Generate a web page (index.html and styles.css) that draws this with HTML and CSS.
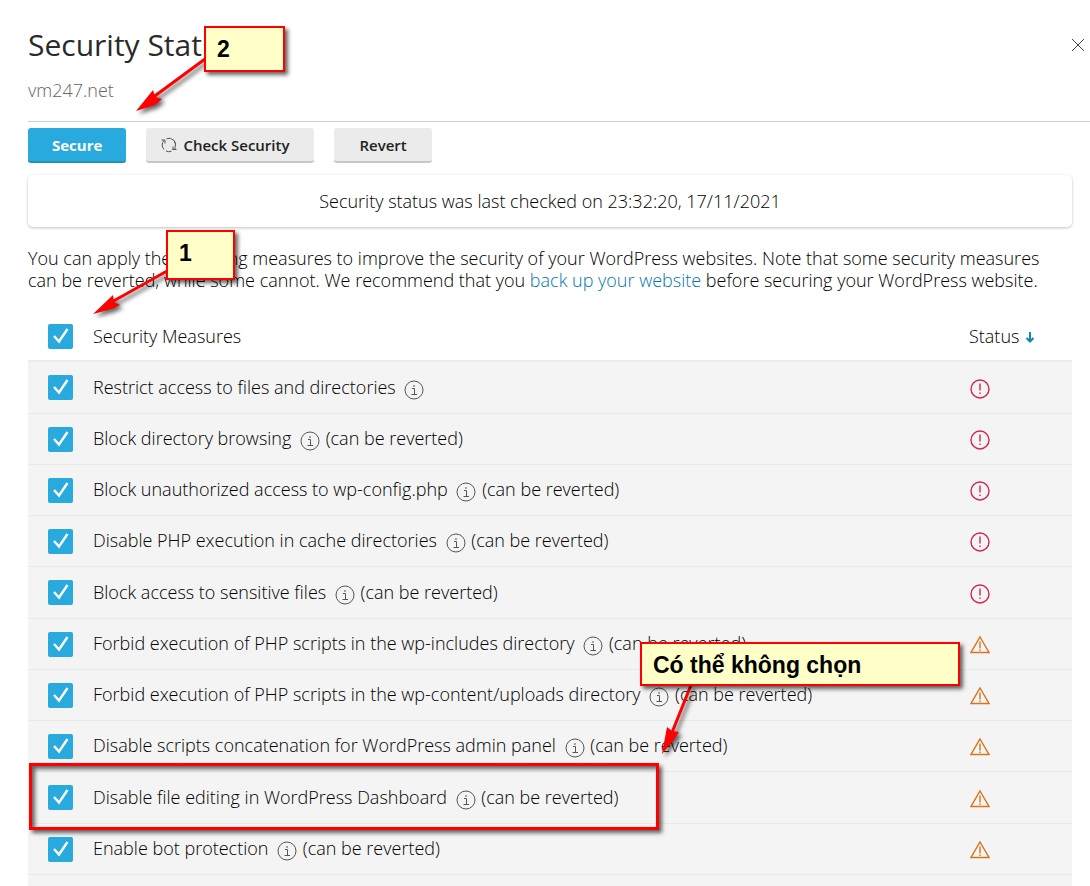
FILE: index.html
```
<!DOCTYPE html>
<html lang="en">
<head>
    <title>Security Status</title>
    <meta charset="UTF-8">
    <link rel="stylesheet" href="styles.css">
</head>
<body>
    <svg class="sprite" aria-hidden="true">
        <symbol id="info" viewBox="0 0 20 20">
            <circle cx="10" cy="10" r="9"/>
            <path d="M8 8.500h2.500v5.500M7.500 14.500h5.500M10 5v2"/>
        </symbol>
        <symbol id="danger" viewBox="0 0 20 20">
            <circle cx="10" cy="10" r="9"/>
            <path d="M10 4.500v7M10 13.500v1.500"/>
        </symbol>
        <symbol id="warning" viewBox="0 0 20 20">
            <path d="M10 2L19 17.500H1z"/>
            <path d="M10 6.500v7M10 14.500v1.500"/>
        </symbol>
    </svg>

    <header class="header">
        <div>
            <h1 class="title">Security Status</h1>
            <div class="domain">vm247.net</div>
        </div>
        <button class="close" aria-label="Close">
            <svg width="14" height="14" viewBox="0 0 14 14"><path d="M1 1l12 12M13 1L1 13"/></svg>
        </button>
    </header>

    <main class="content">
        <div class="toolbar">
            <button class="btn btn-primary">Secure</button>
            <button class="btn">
                <svg class="refresh" width="16" height="16" viewBox="0 0 16 16">
                    <path d="M3 12.500A6.500 6.500 0 0 1 3 3.500M5.500 1.800A6.500 6.500 0 0 1 14 10.500v2M13 3.500A6.500 6.500 0 0 1 14.300 7M10.500 14.200A6.500 6.500 0 0 1 5 14M0.500 3h3.500v3.500M11.500 12.500h4M12 9.500v3.500"/>
                </svg>
                Check Security
            </button>
            <button class="btn">Revert</button>
        </div>

        <div class="last-check">Security status was last checked on 23:32:20, 17/11/2021</div>

        <p class="intro">You can apply the following measures to improve the security of your WordPress websites. Note that some security measures can be reverted, while some cannot. We recommend that you <a href="#">back up your website</a> before securing your WordPress website.</p>

        <div class="list">
            <table class="measures">
                <thead>
                    <tr>
                        <th class="check"><input type="checkbox" aria-label="Select all" checked></th>
                        <th>Security Measures</th>
                        <th class="status">Status <svg class="sort" width="10" height="12" viewBox="0 0 10 12"><path d="M5 1v9M1.500 7L5 10.500L8.500 7"/></svg></th>
                    </tr>
                </thead>
                <tbody>
                    <tr>
                        <td class="check"><input type="checkbox" id="m1" checked></td>
                        <td><label for="m1">Restrict access to files and directories</label> <svg class="icon"><use href="#info"/></svg></td>
                        <td class="status"><svg class="icon danger"><use href="#danger"/></svg></td>
                    </tr>
                    <tr>
                        <td class="check"><input type="checkbox" id="m2" checked></td>
                        <td><label for="m2">Block directory browsing</label> <svg class="icon"><use href="#info"/></svg> (can be reverted)</td>
                        <td class="status"><svg class="icon danger"><use href="#danger"/></svg></td>
                    </tr>
                    <tr>
                        <td class="check"><input type="checkbox" id="m3" checked></td>
                        <td><label for="m3">Block unauthorized access to wp-config.php</label> <svg class="icon"><use href="#info"/></svg> (can be reverted)</td>
                        <td class="status"><svg class="icon danger"><use href="#danger"/></svg></td>
                    </tr>
                    <tr>
                        <td class="check"><input type="checkbox" id="m4" checked></td>
                        <td><label for="m4">Disable PHP execution in cache directories</label> <svg class="icon"><use href="#info"/></svg> (can be reverted)</td>
                        <td class="status"><svg class="icon danger"><use href="#danger"/></svg></td>
                    </tr>
                    <tr>
                        <td class="check"><input type="checkbox" id="m5" checked></td>
                        <td><label for="m5">Block access to sensitive files</label> <svg class="icon"><use href="#info"/></svg> (can be reverted)</td>
                        <td class="status"><svg class="icon danger"><use href="#danger"/></svg></td>
                    </tr>
                    <tr>
                        <td class="check"><input type="checkbox" id="m6" checked></td>
                        <td><label for="m6">Forbid execution of PHP scripts in the wp-includes directory</label> <svg class="icon"><use href="#info"/></svg> (can be reverted)</td>
                        <td class="status"><svg class="icon warning"><use href="#warning"/></svg></td>
                    </tr>
                    <tr>
                        <td class="check"><input type="checkbox" id="m7" checked></td>
                        <td><label for="m7">Forbid execution of PHP scripts in the wp-content/uploads directory</label> <svg class="icon"><use href="#info"/></svg> (can be reverted)</td>
                        <td class="status"><svg class="icon warning"><use href="#warning"/></svg></td>
                    </tr>
                    <tr>
                        <td class="check"><input type="checkbox" id="m8" checked></td>
                        <td><label for="m8">Disable scripts concatenation for WordPress admin panel</label> <svg class="icon"><use href="#info"/></svg> (can be reverted)</td>
                        <td class="status"><svg class="icon warning"><use href="#warning"/></svg></td>
                    </tr>
                    <tr>
                        <td class="check"><input type="checkbox" id="m9" checked></td>
                        <td><label for="m9">Disable file editing in WordPress Dashboard</label> <svg class="icon"><use href="#info"/></svg> (can be reverted)</td>
                        <td class="status"><svg class="icon warning"><use href="#warning"/></svg></td>
                    </tr>
                    <tr>
                        <td class="check"><input type="checkbox" id="m10" checked></td>
                        <td><label for="m10">Enable bot protection</label> <svg class="icon"><use href="#info"/></svg> (can be reverted)</td>
                        <td class="status"><svg class="icon warning"><use href="#warning"/></svg></td>
                    </tr>
                </tbody>
            </table>
        </div>
    </main>

    <!-- notes on top of the page -->
    <svg class="arrows" width="1090" height="886" viewBox="0 0 1090 886" aria-hidden="true">
        <path class="line" d="M205 59L152 98M167 271L110 303M691 685L671 735"/>
        <path d="M136 111L153 90L155 97L162 99L155 105z"/>
        <path d="M93 314L113 295L114 302L120 305L112 309z"/>
        <path d="M662 754L667 727L672 731L679 732L673 741z"/>
    </svg>
    <div class="note note-2">2</div>
    <div class="note note-1">1</div>
    <div class="note note-optional" lang="vi">Có thể không chọn</div>
    <div class="frame"></div>
</body>
</html>
```
FILE: styles.css
```
* { box-sizing: border-box; }
body {
    display: flex;
    flex-direction: column;
    position: relative;
    min-height: 100vh;
    margin: 0;
    padding-left: 28px;
    background: #fff;
    color: #000;
    font: 300 18px/22px "Open Sans", sans-serif;
}
svg { fill: none; stroke: currentColor; }
.sprite { position: absolute; width: 0; height: 0; }

.header {
    display: flex;
    justify-content: space-between;
    align-items: flex-start;
    height: 122px;
    padding: 25px 5px 0 0;
    border-bottom: 1px solid #cfcdd4;
}
.title { margin: 0; color: #2a2a2a; font-size: 30px; line-height: 40px; font-weight: 400; }
.domain { margin-top: 14px; color: #666; }
.close { display: flex; margin-top: 13px; padding: 0; border: 0; background: none; color: #444; cursor: pointer; }

.content { display: flex; flex: 1; flex-direction: column; padding: 6px 18px 0 0; }
.toolbar { display: flex; gap: 20px; }
.btn {
    display: flex;
    align-items: center;
    gap: 6px;
    height: 35px;
    padding: 0 25px;
    border: 0;
    border-bottom: 2px solid #c8c8c8;
    border-radius: 3px;
    background: #ebebeb;
    color: #222;
    font: 600 15px/20px "Open Sans", sans-serif;
    cursor: pointer;
}
.btn-primary { padding: 0 24px; border-color: #2390be; background: #28aade; color: #fff; font-weight: 700; }
.refresh { margin-left: -10px; color: #555; }

.last-check {
    margin-top: 12px;
    padding: 15px;
    border-radius: 5px;
    box-shadow: 0 1px 3px rgba(0, 0, 0, 0.25);
    text-align: center;
}
.intro { margin: 20px 0 0; }
.intro a { color: #0079ad; text-decoration: none; }

.list { flex: 1; margin-top: 19px; background: #f4f4f4; }
.measures { width: 100%; border-collapse: separate; border-spacing: 0; }
.measures th { height: 52px; padding: 2px 0 0; border-bottom: 2px solid #ebebeb; background: #fff; font-weight: 300; text-align: left; }
.measures td { height: 51px; padding: 0; border-bottom: 1px solid #e9e9e9; }
.measures tr:nth-child(4n+1) td { height: 52px; }
.measures .check { width: 65px; padding-left: 20px; }
.measures .status { width: 103px; }
input[type=checkbox] {
    display: block;
    width: 25px;
    height: 25px;
    margin: 0;
    appearance: none;
    border-radius: 2px;
    background: #28aade url("data:image/svg+xml,%3Csvg xmlns='http://www.w3.org/2000/svg' viewBox='0 0 25 25'%3E%3Cpath d='M6 12l5 5.500L19.500 5' fill='none' stroke='white' stroke-width='2.400'/%3E%3C/svg%3E");
}
.icon { width: 20px; height: 20px; margin: 0 1px 0 4px; vertical-align: -6px; color: #555; }
.danger { color: #d0274f; stroke-width: 1.400; }
.warning { color: #d8741c; stroke-width: 1.400; }
.status .icon { display: block; margin: 2px 0 0 1px; }
.sort { margin-left: 1px; color: #1187b8; stroke-width: 2; }

.arrows { position: absolute; top: 0; left: 0; fill: #f00; stroke: none; filter: drop-shadow(3px 3px 2px rgba(0, 0, 0, 0.6)); pointer-events: none; }
.arrows .line { stroke: #f00; stroke-width: 3; }
.note {
    position: absolute;
    padding: 9px 11px;
    border: 2px solid #f00;
    background: #ffffc8;
    box-shadow: 3px 3px 4px rgba(0, 0, 0, 0.6);
    color: #000;
    font: bold 23px/24px "Liberation Sans", sans-serif;
}
.note-2 { top: 26px; left: 204px; width: 81px; height: 46px; }
.note-1 { top: 230px; left: 166px; width: 69px; height: 50px; }
.note-optional { top: 642px; left: 640px; width: 320px; height: 44px; }
.frame {
    position: absolute;
    top: 763px;
    left: 29px;
    width: 630px;
    height: 67px;
    border: 3px solid #f00;
    box-shadow: 3px 3px 4px rgba(0, 0, 0, 0.6), inset 3px 3px 4px rgba(0, 0, 0, 0.6);
    pointer-events: none;
}
```
